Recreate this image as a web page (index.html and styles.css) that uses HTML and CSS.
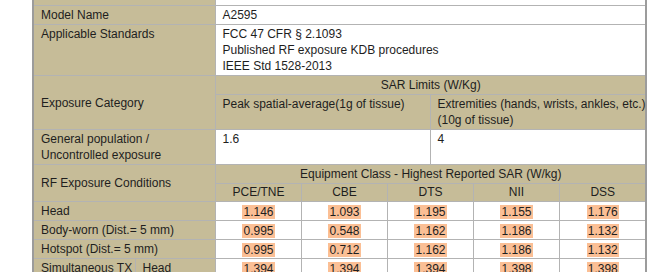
FILE: index.html
```html
<!DOCTYPE html>
<html>
<head>
    <title>SAR Summary</title>
    <link rel="stylesheet" href="styles.css">
</head>
<body>
    <table class="sar-table">
        <colgroup>
            <col class="c-a">
            <col class="c-b">
            <col class="c-w">
            <col class="c-w">
            <col class="c-h">
            <col class="c-h">
            <col class="c-w">
            <col class="c-last">
        </colgroup>
        <tr class="cut-row">
            <td class="label" colspan="2"></td>
            <td class="value" colspan="6"></td>
        </tr>
        <tr>
            <td class="label" colspan="2">Model Name</td>
            <td class="value" colspan="6">A2595</td>
        </tr>
        <tr>
            <td class="label" colspan="2">Applicable Standards</td>
            <td class="value" colspan="6">FCC 47 CFR § 2.1093<br>Published RF exposure KDB procedures<br>IEEE Std 1528-2013</td>
        </tr>
        <tr>
            <td class="label middle" colspan="2" rowspan="2">Exposure Category</td>
            <td class="label center" colspan="6">SAR Limits (W/Kg)</td>
        </tr>
        <tr>
            <td class="label" colspan="3">Peak spatial-average(1g of tissue)</td>
            <td class="label" colspan="3">Extremities (hands, wrists, ankles, etc.)<br>(10g of tissue)</td>
        </tr>
        <tr>
            <td class="label" colspan="2">General population /<br>Uncontrolled exposure</td>
            <td class="value" colspan="3">1.6</td>
            <td class="value" colspan="3">4</td>
        </tr>
        <tr>
            <td class="label middle" colspan="2" rowspan="2">RF Exposure Conditions</td>
            <td class="label center" colspan="6">Equipment Class - Highest Reported SAR (W/kg)</td>
        </tr>
        <tr class="class-row">
            <td class="label center">PCE/TNE</td>
            <td class="label center">CBE</td>
            <td class="label center" colspan="2">DTS</td>
            <td class="label center">NII</td>
            <td class="label center">DSS</td>
        </tr>
        <tr class="data-row">
            <td class="label" colspan="2">Head</td>
            <td class="num"><span>1.146</span></td>
            <td class="num"><span>1.093</span></td>
            <td class="num" colspan="2"><span>1.195</span></td>
            <td class="num"><span>1.155</span></td>
            <td class="num"><span>1.176</span></td>
        </tr>
        <tr class="data-row">
            <td class="label" colspan="2">Body-worn (Dist.= 5 mm)</td>
            <td class="num"><span>0.995</span></td>
            <td class="num"><span>0.548</span></td>
            <td class="num" colspan="2"><span>1.162</span></td>
            <td class="num"><span>1.186</span></td>
            <td class="num"><span>1.132</span></td>
        </tr>
        <tr class="data-row">
            <td class="label" colspan="2">Hotspot (Dist.= 5 mm)</td>
            <td class="num"><span>0.995</span></td>
            <td class="num"><span>0.712</span></td>
            <td class="num" colspan="2"><span>1.162</span></td>
            <td class="num"><span>1.186</span></td>
            <td class="num"><span>1.132</span></td>
        </tr>
        <tr class="data-row">
            <td class="label">Simultaneous TX</td>
            <td class="label">Head</td>
            <td class="num"><span>1.394</span></td>
            <td class="num"><span>1.394</span></td>
            <td class="num" colspan="2"><span>1.394</span></td>
            <td class="num"><span>1.398</span></td>
            <td class="num"><span>1.398</span></td>
        </tr>
    </table>
</body>
</html>
```

FILE: styles.css
```css
html, body {
    margin: 0;
    padding: 0;
    background-color: #ffffff;
    overflow: hidden;
}
body {
    font-family: "Liberation Sans", Arial, sans-serif;
    font-size: 12px;
    color: #1e1e1e;
}
.sar-table {
    border-collapse: collapse;
    table-layout: fixed;
    width: 613px;
    margin: -16px 0 0 32px;
    border: 2px solid #9c9c9c;
}
.c-a { width: 102px; }
.c-b { width: 80px; }
.c-w { width: 86px; }
.c-h { width: 43px; }
.c-last { width: 87px; }
.sar-table td {
    border: 1px solid #b3b3b3;
    padding: 1px 6px 1px 7px;
    line-height: 16px;
    vertical-align: top;
    text-align: left;
    white-space: nowrap;
}
.sar-table .label {
    background-color: #c6bc98;
}
.sar-table .value {
    background-color: #ffffff;
}
.sar-table .middle {
    vertical-align: middle;
}
.sar-table .center {
    text-align: center;
}
.cut-row td {
    height: 17px;
}
.class-row td {
    padding-top: 0;
    padding-bottom: 1px;
}
.sar-table .num {
    background-color: #ffffff;
    text-align: center;
    padding-top: 2px;
    padding-bottom: 0;
}
.num span {
    background-color: #fbbf95;
    padding: 0 1px;
}
```
